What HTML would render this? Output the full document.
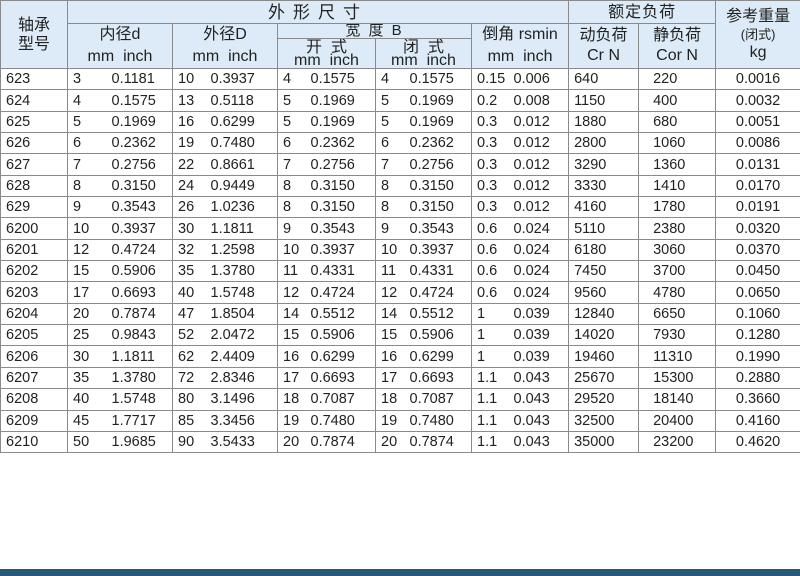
<!DOCTYPE html>
<html><head><meta charset="utf-8"><style>
html,body{margin:0;padding:0;background:#fff;width:800px;height:576px;overflow:hidden;position:relative}
table{border-collapse:collapse;table-layout:fixed;position:absolute;left:0;top:0;width:800px;font-family:"Liberation Sans","Noto Sans CJK SC",sans-serif;color:#222}
td{border:1px solid #8a8a8a;padding:0;white-space:nowrap;overflow:hidden;font-size:14.5px;line-height:20px}
tr.d td{height:20.35px}
.h td{background:#dcebf7;text-align:center;font-size:16px;line-height:17px}
td.m{border-right:none;padding-left:5px}
td.i{border-left:none;padding-left:2px}
td.c{text-align:center}
.bar{position:absolute;left:0;top:569px;width:800px;height:7px;background:#2a5878}
</style></head><body>
<table>
<colgroup>
<col style="width:67px">
<col style="width:40px"><col style="width:65px">
<col style="width:36px"><col style="width:69px">
<col style="width:31px"><col style="width:67px">
<col style="width:32px"><col style="width:64px">
<col style="width:40px"><col style="width:57px">
<col style="width:70px"><col style="width:77px"><col style="width:85px">
</colgroup>
<tr class="h" style="height:23px"><td rowspan="3" style="line-height:19px">轴承<br>型号</td><td colspan="10" style="letter-spacing:8px;font-size:17px">外形尺寸</td><td colspan="2" style="letter-spacing:1px">额定负荷</td><td rowspan="3" style="line-height:18px">参考重量<br><span style="font-size:13px">(闭式)</span><br>kg</td></tr>
<tr class="h" style="height:15px"><td colspan="2" rowspan="2" style="line-height:22px">内径d<br>mm&nbsp; inch</td><td colspan="2" rowspan="2" style="line-height:22px">外径D<br>mm&nbsp; inch</td><td colspan="4" style="line-height:14px;font-size:15px;letter-spacing:2px">宽 度 B</td><td colspan="2" rowspan="2" style="line-height:22px">倒角 rsmin<br>mm&nbsp; inch</td><td rowspan="2" style="line-height:20px">动负荷<br>Cr N</td><td rowspan="2" style="line-height:20px">静负荷<br>Cor N</td></tr>
<tr class="h" style="height:30px"><td colspan="2" style="line-height:13px">开&nbsp; 式<br>mm&nbsp; inch</td><td colspan="2" style="line-height:13px">闭&nbsp; 式<br>mm&nbsp; inch</td></tr>
<tr class="d"><td class="m">623</td><td class="m">3</td><td class="i" style="padding-left:4px">0.1181</td><td class="m">10</td><td class="i">0.3937</td><td class="m">4</td><td class="i">0.1575</td><td class="m">4</td><td class="i">0.1575</td><td class="m">0.15</td><td class="i">0.006</td><td class="m">640</td><td class="m" style="padding-left:14px">220</td><td class="c">0.0016</td></tr>
<tr class="d"><td class="m">624</td><td class="m">4</td><td class="i" style="padding-left:4px">0.1575</td><td class="m">13</td><td class="i">0.5118</td><td class="m">5</td><td class="i">0.1969</td><td class="m">5</td><td class="i">0.1969</td><td class="m">0.2</td><td class="i">0.008</td><td class="m">1150</td><td class="m" style="padding-left:14px">400</td><td class="c">0.0032</td></tr>
<tr class="d"><td class="m">625</td><td class="m">5</td><td class="i" style="padding-left:4px">0.1969</td><td class="m">16</td><td class="i">0.6299</td><td class="m">5</td><td class="i">0.1969</td><td class="m">5</td><td class="i">0.1969</td><td class="m">0.3</td><td class="i">0.012</td><td class="m">1880</td><td class="m" style="padding-left:14px">680</td><td class="c">0.0051</td></tr>
<tr class="d"><td class="m">626</td><td class="m">6</td><td class="i" style="padding-left:4px">0.2362</td><td class="m">19</td><td class="i">0.7480</td><td class="m">6</td><td class="i">0.2362</td><td class="m">6</td><td class="i">0.2362</td><td class="m">0.3</td><td class="i">0.012</td><td class="m">2800</td><td class="m" style="padding-left:14px">1060</td><td class="c">0.0086</td></tr>
<tr class="d"><td class="m">627</td><td class="m">7</td><td class="i" style="padding-left:4px">0.2756</td><td class="m">22</td><td class="i">0.8661</td><td class="m">7</td><td class="i">0.2756</td><td class="m">7</td><td class="i">0.2756</td><td class="m">0.3</td><td class="i">0.012</td><td class="m">3290</td><td class="m" style="padding-left:14px">1360</td><td class="c">0.0131</td></tr>
<tr class="d"><td class="m">628</td><td class="m">8</td><td class="i" style="padding-left:4px">0.3150</td><td class="m">24</td><td class="i">0.9449</td><td class="m">8</td><td class="i">0.3150</td><td class="m">8</td><td class="i">0.3150</td><td class="m">0.3</td><td class="i">0.012</td><td class="m">3330</td><td class="m" style="padding-left:14px">1410</td><td class="c">0.0170</td></tr>
<tr class="d"><td class="m">629</td><td class="m">9</td><td class="i" style="padding-left:4px">0.3543</td><td class="m">26</td><td class="i">1.0236</td><td class="m">8</td><td class="i">0.3150</td><td class="m">8</td><td class="i">0.3150</td><td class="m">0.3</td><td class="i">0.012</td><td class="m">4160</td><td class="m" style="padding-left:14px">1780</td><td class="c">0.0191</td></tr>
<tr class="d"><td class="m">6200</td><td class="m">10</td><td class="i" style="padding-left:4px">0.3937</td><td class="m">30</td><td class="i">1.1811</td><td class="m">9</td><td class="i">0.3543</td><td class="m">9</td><td class="i">0.3543</td><td class="m">0.6</td><td class="i">0.024</td><td class="m">5110</td><td class="m" style="padding-left:14px">2380</td><td class="c">0.0320</td></tr>
<tr class="d"><td class="m">6201</td><td class="m">12</td><td class="i" style="padding-left:4px">0.4724</td><td class="m">32</td><td class="i">1.2598</td><td class="m">10</td><td class="i">0.3937</td><td class="m">10</td><td class="i">0.3937</td><td class="m">0.6</td><td class="i">0.024</td><td class="m">6180</td><td class="m" style="padding-left:14px">3060</td><td class="c">0.0370</td></tr>
<tr class="d"><td class="m">6202</td><td class="m">15</td><td class="i" style="padding-left:4px">0.5906</td><td class="m">35</td><td class="i">1.3780</td><td class="m">11</td><td class="i">0.4331</td><td class="m">11</td><td class="i">0.4331</td><td class="m">0.6</td><td class="i">0.024</td><td class="m">7450</td><td class="m" style="padding-left:14px">3700</td><td class="c">0.0450</td></tr>
<tr class="d"><td class="m">6203</td><td class="m">17</td><td class="i" style="padding-left:4px">0.6693</td><td class="m">40</td><td class="i">1.5748</td><td class="m">12</td><td class="i">0.4724</td><td class="m">12</td><td class="i">0.4724</td><td class="m">0.6</td><td class="i">0.024</td><td class="m">9560</td><td class="m" style="padding-left:14px">4780</td><td class="c">0.0650</td></tr>
<tr class="d"><td class="m">6204</td><td class="m">20</td><td class="i" style="padding-left:4px">0.7874</td><td class="m">47</td><td class="i">1.8504</td><td class="m">14</td><td class="i">0.5512</td><td class="m">14</td><td class="i">0.5512</td><td class="m">1</td><td class="i">0.039</td><td class="m">12840</td><td class="m" style="padding-left:14px">6650</td><td class="c">0.1060</td></tr>
<tr class="d"><td class="m">6205</td><td class="m">25</td><td class="i" style="padding-left:4px">0.9843</td><td class="m">52</td><td class="i">2.0472</td><td class="m">15</td><td class="i">0.5906</td><td class="m">15</td><td class="i">0.5906</td><td class="m">1</td><td class="i">0.039</td><td class="m">14020</td><td class="m" style="padding-left:14px">7930</td><td class="c">0.1280</td></tr>
<tr class="d"><td class="m">6206</td><td class="m">30</td><td class="i" style="padding-left:4px">1.1811</td><td class="m">62</td><td class="i">2.4409</td><td class="m">16</td><td class="i">0.6299</td><td class="m">16</td><td class="i">0.6299</td><td class="m">1</td><td class="i">0.039</td><td class="m">19460</td><td class="m" style="padding-left:14px">11310</td><td class="c">0.1990</td></tr>
<tr class="d"><td class="m">6207</td><td class="m">35</td><td class="i" style="padding-left:4px">1.3780</td><td class="m">72</td><td class="i">2.8346</td><td class="m">17</td><td class="i">0.6693</td><td class="m">17</td><td class="i">0.6693</td><td class="m">1.1</td><td class="i">0.043</td><td class="m">25670</td><td class="m" style="padding-left:14px">15300</td><td class="c">0.2880</td></tr>
<tr class="d"><td class="m">6208</td><td class="m">40</td><td class="i" style="padding-left:4px">1.5748</td><td class="m">80</td><td class="i">3.1496</td><td class="m">18</td><td class="i">0.7087</td><td class="m">18</td><td class="i">0.7087</td><td class="m">1.1</td><td class="i">0.043</td><td class="m">29520</td><td class="m" style="padding-left:14px">18140</td><td class="c">0.3660</td></tr>
<tr class="d"><td class="m">6209</td><td class="m">45</td><td class="i" style="padding-left:4px">1.7717</td><td class="m">85</td><td class="i">3.3456</td><td class="m">19</td><td class="i">0.7480</td><td class="m">19</td><td class="i">0.7480</td><td class="m">1.1</td><td class="i">0.043</td><td class="m">32500</td><td class="m" style="padding-left:14px">20400</td><td class="c">0.4160</td></tr>
<tr class="d"><td class="m">6210</td><td class="m">50</td><td class="i" style="padding-left:4px">1.9685</td><td class="m">90</td><td class="i">3.5433</td><td class="m">20</td><td class="i">0.7874</td><td class="m">20</td><td class="i">0.7874</td><td class="m">1.1</td><td class="i">0.043</td><td class="m">35000</td><td class="m" style="padding-left:14px">23200</td><td class="c">0.4620</td></tr>
</table>
<div class="bar"></div>
</body></html>
